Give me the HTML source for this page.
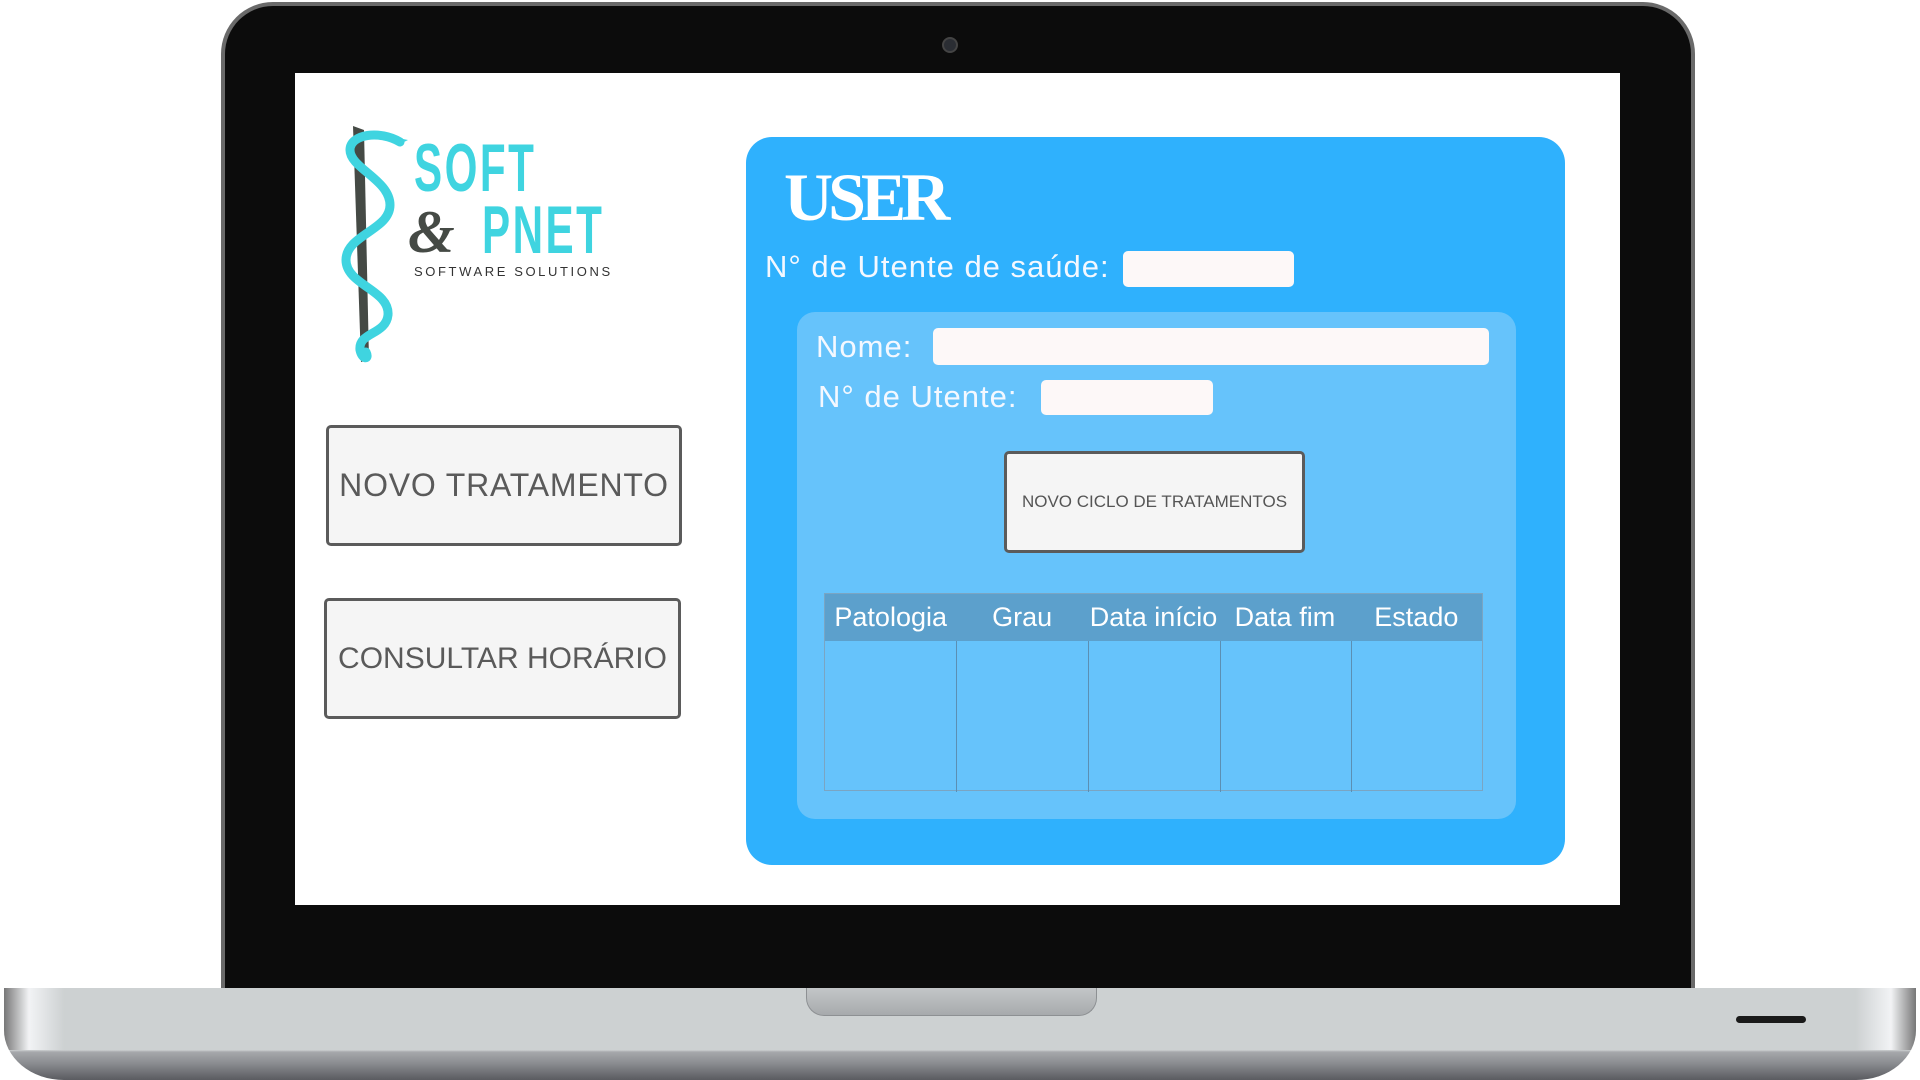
<!DOCTYPE html>
<html><head><meta charset="utf-8">
<style>
*{margin:0;padding:0;box-sizing:border-box}
html,body{width:1920px;height:1080px;overflow:hidden;background:#fff;font-family:"Liberation Sans",sans-serif}
.abs{position:absolute}
#bezel{left:221px;top:2px;width:1474px;height:1000px;background:#0c0c0c;border-radius:52px 52px 0 0;border:4px solid #6a6a6a;border-bottom:none}
#screen{left:295px;top:73px;width:1325px;height:832px;background:#fff}
#cam{left:942px;top:37px;width:16px;height:16px;border-radius:50%;background:#2a2d33;border:2px solid #444}
#base{left:4px;top:988px;width:1912px;height:92px;border-radius:0 0 60px 60px/0 0 50px 50px;overflow:hidden;
 background:linear-gradient(#cdd1d2 0,#cdd1d2 62px,#a6a8ab 64px,#8b8d91 75px,#5a5b60 92px)}
#baseL{left:0;top:0;width:60px;height:62px;background:linear-gradient(90deg,#777 0,#f2f3f5 25px,#cdd1d2 60px)}
#baseR{right:0;top:0;width:60px;height:62px;background:linear-gradient(270deg,#777 0,#f2f3f5 25px,#cdd1d2 60px)}
#notch{left:806px;top:988px;width:291px;height:28px;border-radius:0 0 18px 18px;background:linear-gradient(#c3c6c8,#a7aaad);border:1px solid #8d9093;border-top:none}
#slot{left:1736px;top:1016px;width:70px;height:7px;border-radius:4px;background:#1a1a1a}
.lbtn{background:#f5f5f5;border:3px solid #5b5b5b;border-radius:5px;color:#5a5a5a;display:flex;align-items:center;justify-content:center;white-space:nowrap}
#panel{left:746px;top:137px;width:819px;height:728px;background:#2fb1fd;border-radius:26px}
#inner{left:797px;top:312px;width:719px;height:507px;background:#66c3fb;border-radius:18px}
.lbl{color:#f4f8ff;font-size:31px;letter-spacing:1px;white-space:nowrap}
.inp{background:#fdf8f8;border-radius:5px}
#user{left:784px;top:158px;color:#fff;font-family:"Liberation Serif",serif;font-weight:bold;font-size:68px;letter-spacing:-5px}
#cbtn{left:1004px;top:451px;width:301px;height:102px;background:#f5f5f5;border:3px solid #5b5b5b;border-radius:5px;color:#555;font-size:17px;display:flex;align-items:center;justify-content:center;white-space:nowrap}
#table{left:824px;top:593px;width:659px;height:198px;border:1px solid #7aa5c3}
#thead{left:0;top:0;width:100%;height:47px;background:#5ca0cc;display:flex}
#thead div{flex:1;color:#fff;font-size:27px;display:flex;align-items:center;justify-content:center}
.col{top:47px;width:1px;height:151px;background:#5b8fb3}
.logo{color:#3fd4e0;font-weight:bold;letter-spacing:4px;transform:scaleX(0.62);transform-origin:0 0;white-space:nowrap}
</style></head><body>
<div class="abs" id="bezel"></div>
<div class="abs" id="cam"></div>
<div class="abs" id="screen"></div>
<div class="abs" id="base"><div class="abs" id="baseL"></div><div class="abs" id="baseR"></div></div>
<div class="abs" id="notch"></div>
<div class="abs" id="slot"></div>

<svg class="abs" style="left:330px;top:120px" width="100" height="250" viewBox="0 0 100 250">
<polygon points="23,6 34,10 39,240 31,242" fill="#454a45"/>
<path d="M70,22 C50,10 20,14 20,30 C20,48 60,60 60,85 C60,110 16,115 16,140 C16,165 60,170 58,195 C56,215 28,212 30,230 C32,240 40,240 36,232" fill="none" stroke="#3fd4e0" stroke-width="9" stroke-linecap="round"/>
<path d="M58,16 L78,20 L70,24 Z" fill="#3fd4e0"/>
</svg>
<div class="abs logo" style="left:414px;top:134px;font-size:68px;line-height:68px">SOFT</div>
<div class="abs" style="left:408px;top:202px;font-family:'Liberation Serif',serif;font-size:60px;line-height:60px;color:#454a45;font-weight:bold;font-style:italic">&amp;</div>
<div class="abs logo" style="left:482px;top:196px;font-size:68px;line-height:68px">PNET</div>
<div class="abs" style="left:414px;top:264px;font-size:13px;letter-spacing:2.6px;color:#333">SOFTWARE SOLUTIONS</div>

<div class="abs lbtn" style="left:326px;top:425px;width:356px;height:121px;font-size:32px;letter-spacing:0.8px">NOVO TRATAMENTO</div>
<div class="abs lbtn" style="left:324px;top:598px;width:357px;height:121px;font-size:30px">CONSULTAR HORÁRIO</div>

<div class="abs" id="panel"></div>
<div class="abs" id="user">USER</div>
<div class="abs lbl" style="left:765px;top:249px">N° de Utente de saúde:</div>
<div class="abs inp" style="left:1123px;top:251px;width:171px;height:36px"></div>
<div class="abs" id="inner"></div>
<div class="abs lbl" style="left:816px;top:329px">Nome:</div>
<div class="abs inp" style="left:933px;top:328px;width:556px;height:37px"></div>
<div class="abs lbl" style="left:818px;top:379px">N° de Utente:</div>
<div class="abs inp" style="left:1041px;top:380px;width:172px;height:35px"></div>
<div class="abs" id="cbtn">NOVO CICLO DE TRATAMENTOS</div>
<div class="abs" id="table">
 <div class="abs" id="thead"><div>Patologia</div><div>Grau</div><div>Data início</div><div>Data fim</div><div>Estado</div></div>
 <div class="abs col" style="left:131px"></div>
 <div class="abs col" style="left:263px"></div>
 <div class="abs col" style="left:395px"></div>
 <div class="abs col" style="left:526px"></div>
</div>
</body></html>
